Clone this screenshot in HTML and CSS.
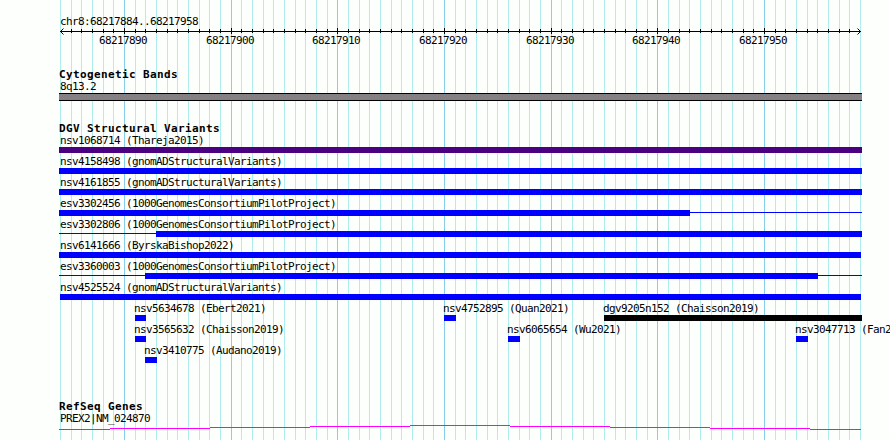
FILE: index.html
```html
<!DOCTYPE html>
<html lang="en">
<head>
  <meta charset="UTF-8">
  <title>chr8:68217884..68217958</title>
  <link rel="stylesheet" href="styles.css">
</head>
<body>
  <div class="browser">

    <!-- Ruler -->
    <div class="ruler">
      <div class="region">chr8:68217884..68217958</div>
      <div class="axis">
        <svg class="arrow" width="4" height="7" viewBox="0 0 4 7"><path d="M3.5 .5L.5 3.5L3.5 6.5"/></svg>
        <div class="ticks"></div>
        <svg class="arrow" width="4" height="7" viewBox="0 0 4 7"><path d="M.5 .5L3.5 3.5L.5 6.5"/></svg>
      </div>
      <div class="positions" id="positions"></div>
    </div>

    <div class="track cytobands">
      <h2>Cytogenetic Bands</h2>
      <div class="row">
        <div class="feature">
          <div class="label">8q13.2</div>
          <div class="band"></div>
        </div>
      </div>
    </div>

    <div class="track variants">
      <h2>DGV Structural Variants</h2>
      <div id="variants"></div>
    </div>

    <div class="track genes">
      <h2>RefSeq Genes</h2>
      <div class="row">
        <div class="feature">
          <div class="label">PREX2|NM_024870</div>
          <svg class="intron" width="802" height="5" viewBox="0 0 802 5">
            <path d="M0 4.5H51M51 3.5H151M151 2.5H251M251 1.5H351M351 .5H451M451 1.5H551M551 2.5H651M651 3.5H751M751 4.5H802"/>
          </svg>
        </div>
      </div>
    </div>

  </div>

  <script>
    // x is the left edge inside the panel, segments are [type, width]
    const rows = [
      [{ name: "nsv1068714 (Thareja2015)", x: 0, segments: [["complex", 803]] }],
      [{ name: "nsv4158498 (gnomADStructuralVariants)", x: 0, segments: [["gain", 803]] }],
      [{ name: "nsv4161855 (gnomADStructuralVariants)", x: 0, segments: [["gain", 803]] }],
      [{ name: "esv3302456 (1000GenomesConsortiumPilotProject)", x: 0, segments: [["gain", 631], ["thin", 172]] }],
      [{ name: "esv3302806 (1000GenomesConsortiumPilotProject)", x: 0, segments: [["thin", 97], ["gain", 706]] }],
      [{ name: "nsv6141666 (ByrskaBishop2022)", x: 0, segments: [["gain", 802]] }],
      [{ name: "esv3360003 (1000GenomesConsortiumPilotProject)", x: 0, segments: [["thin", 86], ["gain", 673], ["thin", 44]] }],
      [{ name: "nsv4525524 (gnomADStructuralVariants)", x: 1, segments: [["gain", 801]] }],
      [
        { name: "nsv5634678 (Ebert2021)", x: 76, segments: [["gain", 11]] },
        { name: "nsv4752895 (Quan2021)", x: 385, segments: [["gain", 12]] },
        { name: "dgv9205n152 (Chaisson2019)", x: 545, segments: [["merged", 258]] }
      ],
      [
        { name: "nsv3565632 (Chaisson2019)", x: 76, segments: [["gain", 11]] },
        { name: "nsv6065654 (Wu2021)", x: 449, segments: [["gain", 12]] },
        { name: "nsv3047713 (Fan2021)", x: 737, segments: [["gain", 12]] }
      ],
      [{ name: "nsv3410775 (Audano2019)", x: 86, segments: [["gain", 12]] }]
    ];

    document.getElementById("variants").innerHTML = rows.map(row => `
      <div class="row">
        ${row.map(f => `
          <div class="feature" style="margin-left: ${f.x}px">
            <div class="label${f.x > 1 ? " inset" : f.x ? " flush" : ""}">${f.name}</div>
            <div class="glyph">
              ${f.segments.map(s => `<div class="${s[0]}" style="width: ${s[1]}px"></div>`).join("")}
            </div>
          </div>
        `).join("")}
      </div>
    `).join("");

    // one number under every tenth base
    let positions = "";
    for (let pos = 68217890; pos <= 68217950; pos += 10) {
      const x = Math.round((pos - 68217884) * 800 / 75) - 25;
      positions += `<span style="margin-left: ${x}px">${pos}</span>`;
    }
    document.getElementById("positions").innerHTML = positions;
  </script>
</body>
</html>
```
FILE: styles.css
```css
* {
  margin: 0;
  padding: 0;
  box-sizing: border-box;
}

body {
  background: #fdfffc;
  color: #000;
  font-family: "DejaVu Sans Mono", monospace;
  font-size: 11px;
  line-height: 13px;
  letter-spacing: -0.622px;
  overflow: hidden;
}

.browser {
  position: relative;
  width: 890px;
  height: 440px;
  padding: 15px 0 0 59px;
  overflow: hidden;
  white-space: nowrap;
}

/* Vertical grid: minor line per base, major line per ten */
.browser::before {
  content: "";
  position: absolute;
  z-index: -1;
  top: 0;
  left: 60px;
  width: 801px;
  height: 440px;
  background-image:
    linear-gradient(to right, #87ceeb 1px, transparent 1px 107px, #87ceeb 107px 108px, transparent 108px 213px, #87ceeb 213px 214px, transparent 214px),
    linear-gradient(to right, #afeeee 1px, transparent 1px 11px, #afeeee 11px 12px, transparent 12px 21px, #afeeee 21px 22px, transparent 22px);
  background-size: 320px 440px, 32px 440px;
  background-position: 64px 0, 0 0;
}

/* Ruler */
.ruler {
  margin-bottom: 21px;
  padding-left: 1px;
}

.axis {
  display: flex;
  width: 801px;
  height: 6px;
  background: linear-gradient(#000, #000) 0 3px / 100% 1px no-repeat;
}

.arrow {
  flex: none;
  fill: none;
  stroke: #000;
}

.ticks {
  flex: 1;
  height: 6px;
  background-image:
    linear-gradient(to right, #000 1px, transparent 1px 107px, #000 107px 108px, transparent 108px 213px, #000 213px 214px, transparent 214px),
    linear-gradient(to right, #000 1px, transparent 1px 11px, #000 11px 12px, transparent 12px 21px, #000 21px 22px, transparent 22px);
  background-size: 320px 6px, 32px 4px;
  background-position: 60px 0, -4px 1px;
  background-repeat: repeat-x;
}

.positions {
  display: grid;
}

.positions span {
  grid-area: 1 / 1;
}

/* Tracks */
.track h2 {
  height: 10px;
  font-size: 11px;
  font-weight: bold;
  letter-spacing: 0.378px;
}

.row {
  display: grid;
}

.feature {
  grid-area: 1 / 1;
}

.label {
  height: 15px;
  padding: 2px 0 0 1px;
}

.label.flush {
  padding-left: 0;
}

.label.inset {
  padding-left: 0;
  text-indent: -1px;
}

.cytobands {
  margin-bottom: 21px;
}

.band {
  width: 803px;
  height: 8px;
  background: #848084;
  border: solid #000;
  border-width: 1px 0;
}

.variants {
  margin-bottom: 37px;
}

.glyph {
  display: flex;
  height: 6px;
}

.gain {
  background: #0000ff;
}

.complex {
  background: #4b0082;
}

.merged {
  background: #000;
}

.thin {
  height: 1px;
  margin-top: 2px;
  background: #0000ff;
}

.intron {
  display: block;
  stroke: #f0f;
}
```
